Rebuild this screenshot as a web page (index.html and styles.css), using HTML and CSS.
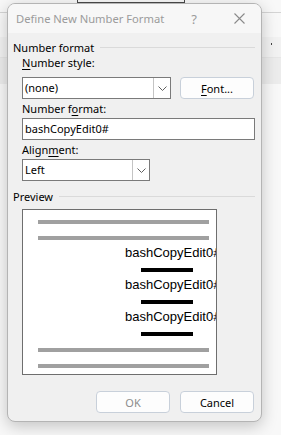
FILE: index.html
```html
<!DOCTYPE html>
<html lang="en">
<head>
  <meta charset="UTF-8" />
  <title>Define New Number Format</title>
  <link rel="stylesheet" href="styles.css">
</head>
<body>

<div class="dialog">
  <div class="titlebar">
    <span class="title">Define New Number Format</span>
    <span class="help">?</span>
    <span class="close">
      <svg width="11" height="11" viewBox="0 0 11 11"><path d="M0.5 0.5 L10.5 10.5 M10.5 0.5 L0.5 10.5" stroke="#8a8a8a" stroke-width="1.1" fill="none"/></svg>
    </span>
  </div>

  <div class="content">
    <div class="group">Number format</div>

    <div class="field-label"><u>N</u>umber style:</div>
    <div class="row">
      <div class="combo combo-style">
        <span class="combo-value">(none)</span>
        <span class="combo-btn">
          <svg width="9" height="5" viewBox="0 0 9 5"><path d="M0.5 0.5 L4.5 4.5 L8.5 0.5" stroke="#606060" fill="none"/></svg>
        </span>
      </div>
      <button class="btn btn-font"><u>F</u>ont...</button>
    </div>

    <div class="field-label">Number f<u>o</u>rmat:</div>
    <div class="input">bashCopyEdit0#</div>

    <div class="field-label">Align<u>m</u>ent:</div>
    <div class="combo combo-align">
      <span class="combo-value">Left</span>
      <span class="combo-btn">
        <svg width="9" height="5" viewBox="0 0 9 5"><path d="M0.5 0.5 L4.5 4.5 L8.5 0.5" stroke="#606060" fill="none"/></svg>
      </span>
    </div>

    <div class="group group-preview">Preview</div>
    <div class="preview">
      <div class="pv-line first"></div>
      <div class="pv-line"></div>
      <div class="pv-text">bashCopyEdit0#</div>
      <div class="pv-bar"></div>
      <div class="pv-text">bashCopyEdit0#</div>
      <div class="pv-bar"></div>
      <div class="pv-text">bashCopyEdit0#</div>
      <div class="pv-bar"></div>
      <div class="pv-line after-bar"></div>
      <div class="pv-line"></div>
    </div>

    <div class="actions">
      <button class="btn btn-disabled">OK</button>
      <button class="btn">Cancel</button>
    </div>
  </div>
</div>

</body>
</html>
```

FILE: styles.css
```css
* {
  margin: 0;
  padding: 0;
  box-sizing: border-box;
}

html, body {
  height: 100%;
  overflow: hidden;
}

body {
  font-family: 'Noto Sans', 'Open Sans', sans-serif;
  font-size: 11px;
  color: #000;
  padding: 3px 0 0 7px;
  /* the app window behind the dialog */
  background:
    linear-gradient(#4a4a4a, #4a4a4a) 77px 2px / 108px 1px no-repeat,
    linear-gradient(#4a4a4a, #4a4a4a) 77px 0 / 1px 3px no-repeat,
    linear-gradient(#4a4a4a, #4a4a4a) 184px 0 / 1px 3px no-repeat,
    linear-gradient(#d4d4d4, #d4d4d4) 0 12px / 100% 1px no-repeat,
    linear-gradient(#444, #444) 271px 43px / 1px 2px no-repeat,
    linear-gradient(#f2f2f2, #f2f2f2) 0 37px / 100% 20px no-repeat,
    linear-gradient(#e6e6e6, #e6e6e6) 0 57px / 100% 1px no-repeat,
    linear-gradient(#ececec, #ececec) 0 58px / 100% 26px no-repeat,
    #f8f8f8;
}

u {
  text-decoration: underline;
  text-underline-offset: 2px;
}

.dialog {
  width: 255px;
  height: 419px;
  background: #f0f0f0;
  border: 1px solid #b4b4b4;
  border-radius: 8px;
  box-shadow: 0 4px 16px rgba(0, 0, 0, 0.22);
  overflow: hidden;
}

.titlebar {
  height: 29px;
  display: flex;
  align-items: center;
  padding: 0 12px 0 8px;
  background: #f7f7f7;
  color: #9b9b9b;
  font-size: 11.2px;
}

.help {
  margin-left: auto;
  width: 20px;
  text-align: center;
  font-size: 13px;
}

.close {
  width: 20px;
  margin-left: 25px;
  display: flex;
  justify-content: center;
}

.content {
  padding: 0 6px 0 5px;
}

.group {
  display: flex;
  align-items: center;
  gap: 6px;
  height: 16px;
  margin-top: 6px;
}

.group::after {
  content: '';
  flex: 1;
  height: 1px;
  background: #dadada;
}

.group-preview {
  margin-top: 7px;
}

.field-label {
  margin: 2px 0 1px 9px;
  height: 16px;
  line-height: 16px;
}

.group + .field-label {
  margin-top: 0;
  margin-bottom: 6px;
}

.row {
  display: flex;
  margin-left: 9px;
}

.combo {
  height: 22px;
  display: flex;
  background: #fff;
  border: 1px solid #7a7a7a;
  margin-left: 9px;
}

.row .combo {
  margin-left: 0;
}

.combo-style {
  width: 149px;
}

.combo-align {
  width: 128px;
}

.combo-value {
  flex: 1;
  padding-left: 2px;
  line-height: 20px;
}

.combo-btn {
  width: 17px;
  display: flex;
  align-items: center;
  justify-content: center;
  border-left: 1px solid #c4c4c4;
}

.input {
  height: 22px;
  margin-left: 9px;
  padding-left: 2px;
  line-height: 20px;
  background: #fff;
  border: 1px solid #7a7a7a;
}

.btn {
  width: 74px;
  height: 22px;
  font-family: inherit;
  font-size: 11px;
  color: #000;
  background: #fdfdfd;
  border: 1px solid #c8d0da;
  border-radius: 4px;
}

.btn-font {
  margin: 0 1px 0 auto;
}

.btn-disabled {
  color: #8c8c8c;
}

.preview {
  width: 195px;
  height: 166px;
  margin: 5px 0 0 9px;
  padding: 0 0 0 15px;
  background: #fff;
  border: 1px solid #6e6e6e;
  overflow: hidden;
  white-space: nowrap;
}

.pv-line {
  width: 171px;
  height: 4px;
  margin-top: 12px;
  background: #a0a0a0;
}

.pv-line.first {
  margin-top: 10px;
}

.pv-line.after-bar {
  margin-top: 12px;
}

.pv-text {
  font-family: 'Liberation Sans', Arial, sans-serif;
  font-size: 13px;
  line-height: 15px;
  margin: 5px 0 0 87px;
}

.pv-bar {
  width: 52px;
  height: 4px;
  margin: 8px 0 0 103px;
  background: #000;
}

.actions {
  display: flex;
  justify-content: flex-end;
  gap: 10px;
  margin: 16px 1px 0 0;
}
```
